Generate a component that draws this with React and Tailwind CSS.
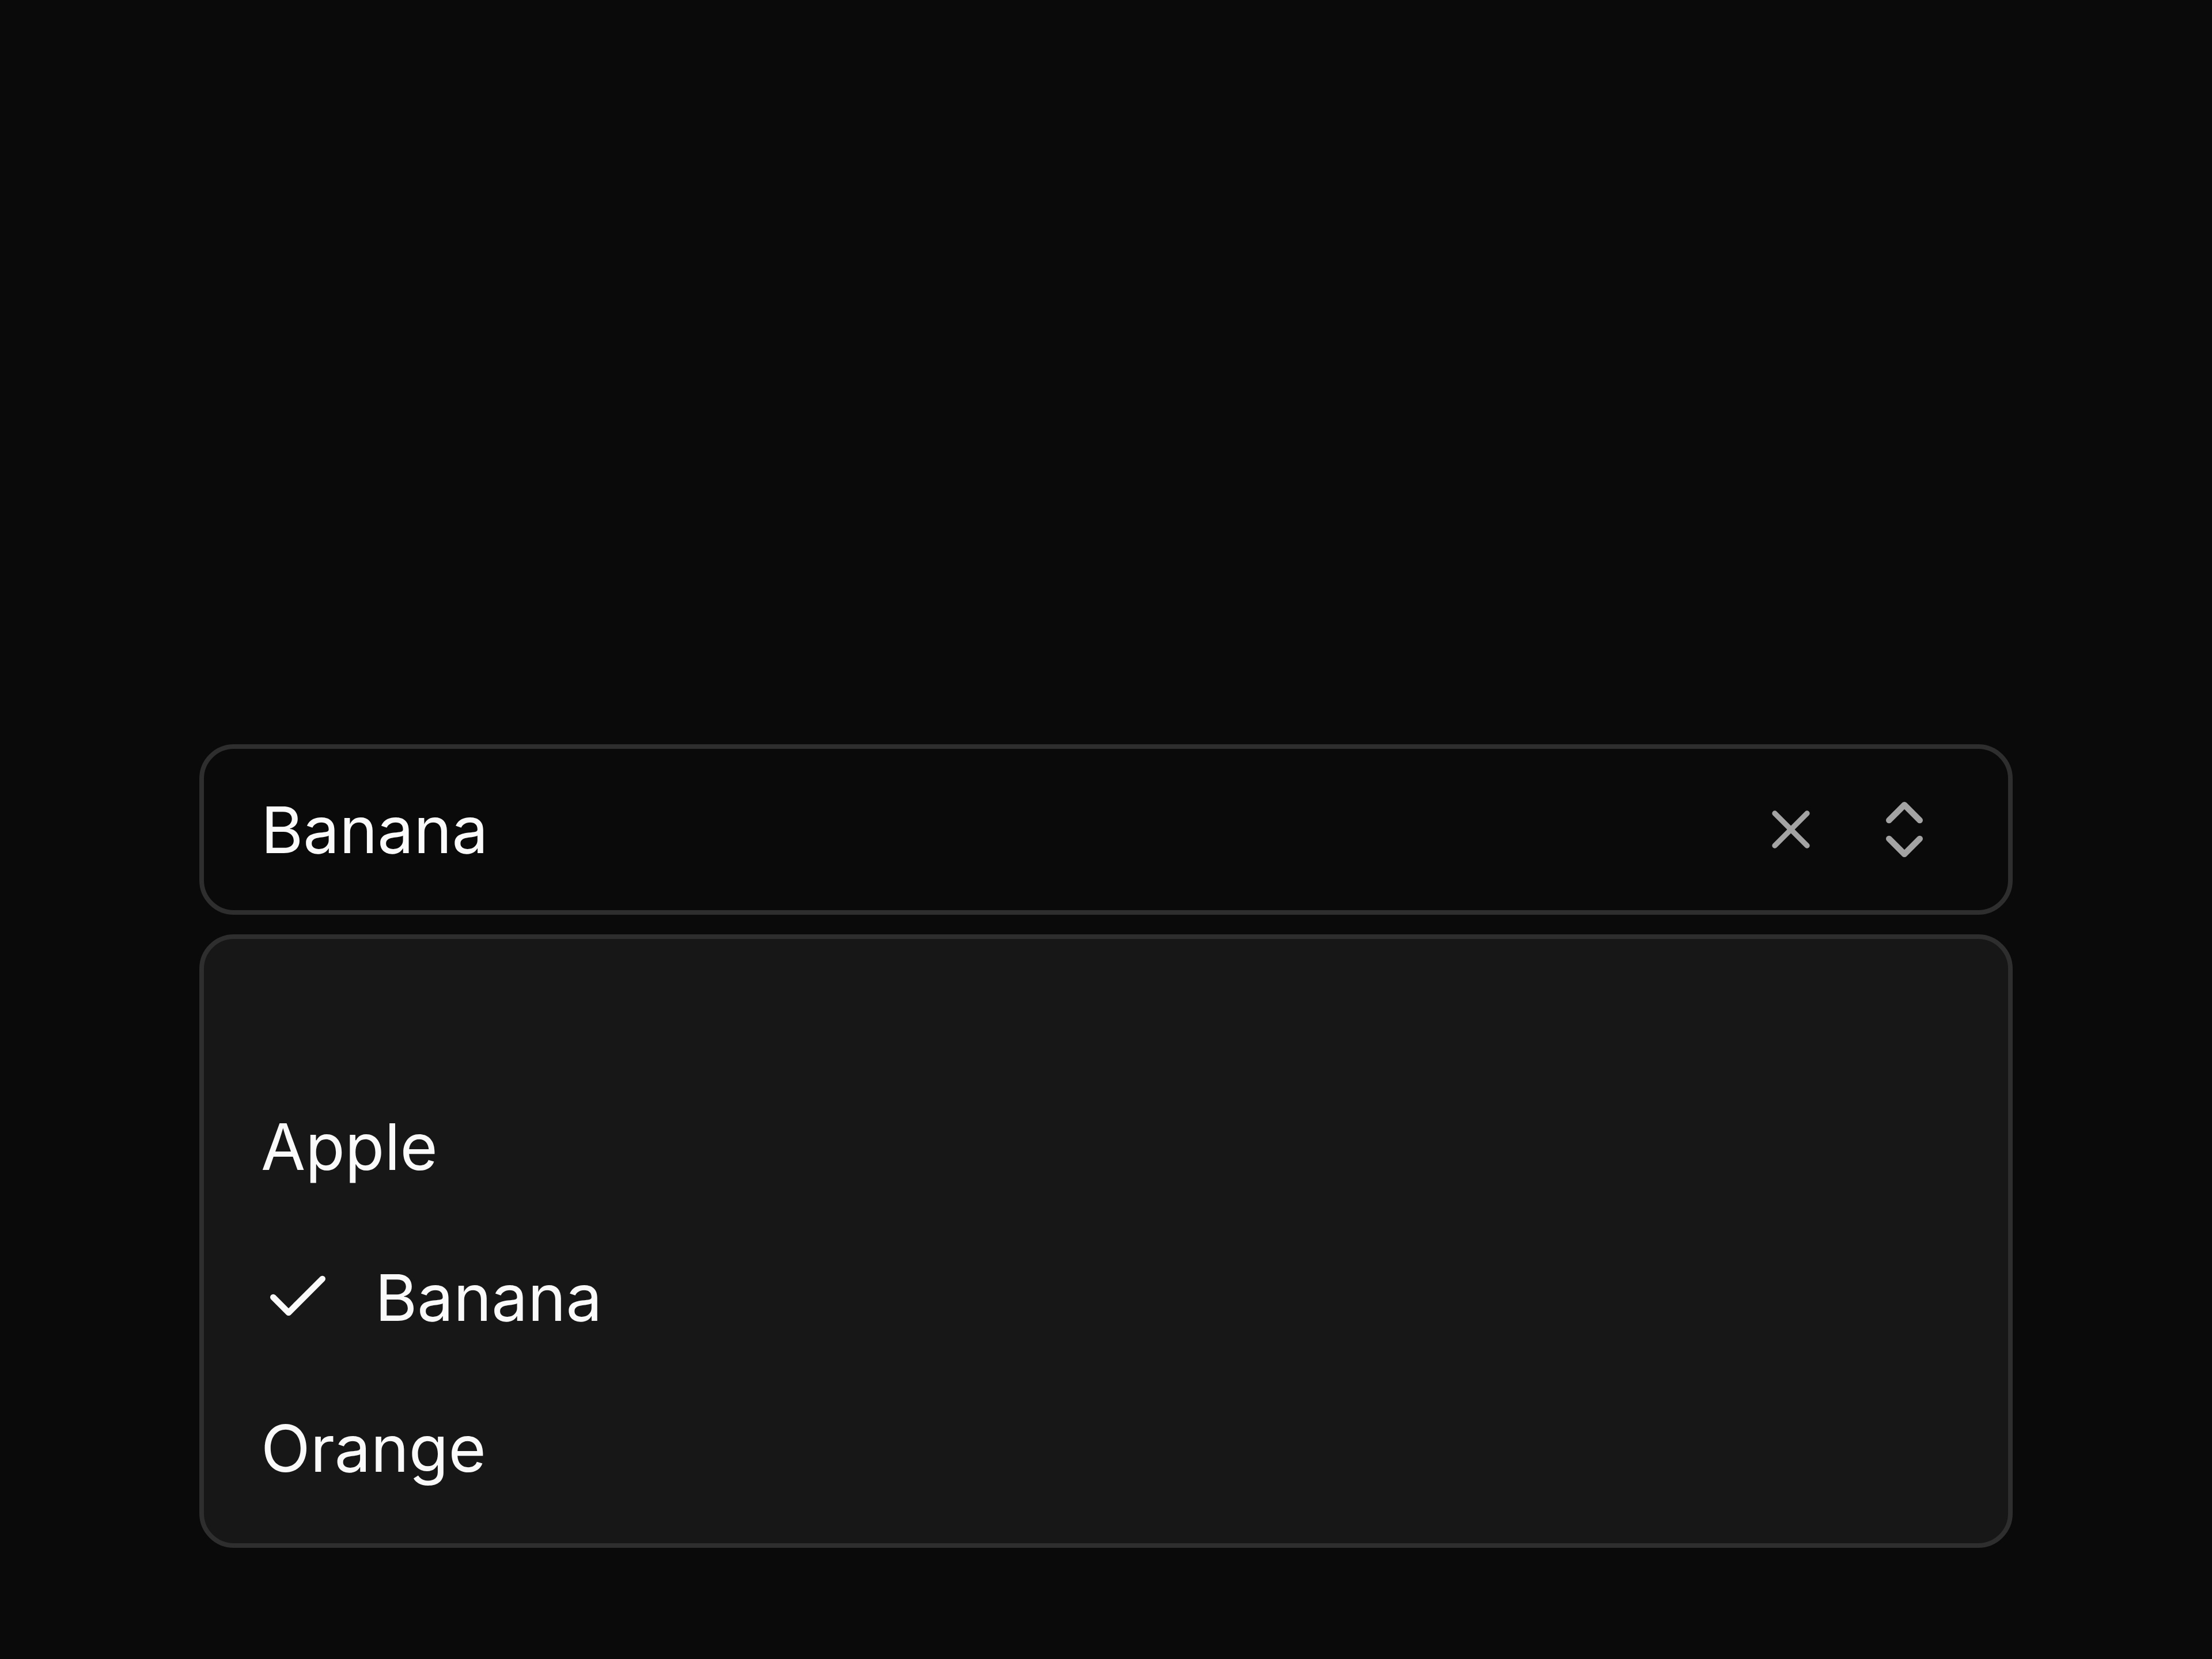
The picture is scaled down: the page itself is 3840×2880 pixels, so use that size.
import React from 'react';
import { X, ChevronsUpDown, Check } from 'lucide-react';

const fruits = ['Apple', 'Banana', 'Orange'];

const App = () => {
  const selected = 'Banana';

  return (
    <div
      className="min-h-screen w-full bg-[#0a0a0a] px-[346px] pt-[1292px] text-[#fafafa]"
      style={{ fontFamily: 'Inter, "Noto Sans", sans-serif' }}
    >
      <div className="flex h-[296px] items-center rounded-[60px] border-[8px] border-[#2e2e2e] bg-[#0a0a0a] pl-[99px] pr-[116px]">
        <span className="flex-1 text-[112px] leading-none">{selected}</span>
        <X size={112} strokeWidth={2} className="text-[#a3a3a3]" />
        <ChevronsUpDown size={128} strokeWidth={2} className="ml-[77px] text-[#a3a3a3]" />
      </div>

      <div className="mt-[34px] rounded-[60px] border-[8px] border-[#2e2e2e] bg-[#171717] pt-[32px] pb-[34px] pl-[99px] pr-[96px]">
        <div className="h-[197px]" />
        {fruits.map((fruit) => (
          <div key={fruit} className="flex h-[262px] items-center text-[112px] leading-none">
            {fruit === selected && (
              <Check size={128} strokeWidth={2} className="mr-[70px] text-[#fafafa]" />
            )}
            <span>{fruit}</span>
          </div>
        ))}
      </div>
    </div>
  );
};

export default App;
